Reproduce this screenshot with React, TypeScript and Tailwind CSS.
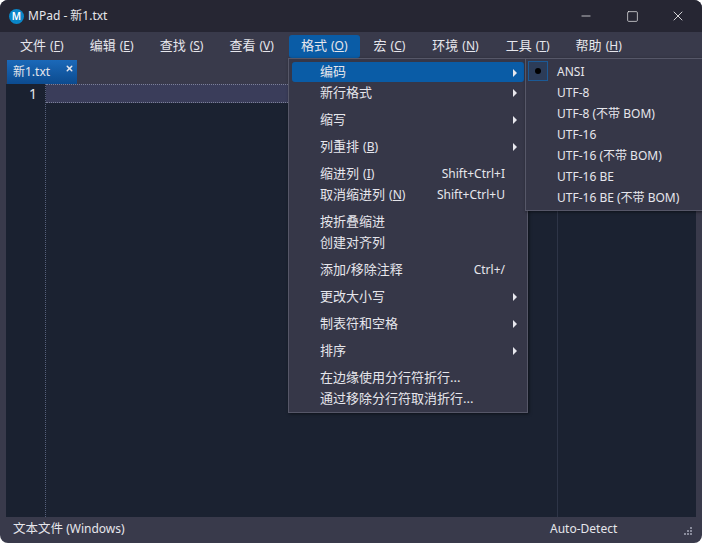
import { X, Minus, Square } from "lucide-react";

const menuBar = [
  { label: "文件", key: "F", extra: "" },
  { label: "编辑", key: "E", extra: "" },
  { label: "查找", key: "S", extra: "" },
  { label: "查看", key: "V", extra: "" },
  { label: "格式", key: "O", active: true, extra: "ml-[1px]" },
  { label: "宏", key: "C", extra: "" },
  { label: "环境", key: "N", extra: "ml-[1px]" },
  { label: "工具", key: "T", extra: "ml-[1px]" },
  { label: "帮助", key: "H", extra: "" },
];

const groups = [
  [
    { label: "编码", arrow: true, active: true },
    { label: "新行格式", arrow: true },
  ],
  [{ label: "缩写", arrow: true }],
  [{ label: "列重排", accel: "B", arrow: true }],
  [
    { label: "缩进列", accel: "I", shortcut: "Shift+Ctrl+I" },
    { label: "取消缩进列", accel: "N", shortcut: "Shift+Ctrl+U" },
  ],
  [{ label: "按折叠缩进" }, { label: "创建对齐列" }],
  [{ label: "添加/移除注释", shortcut: "Ctrl+/" }],
  [{ label: "更改大小写", arrow: true }],
  [{ label: "制表符和空格", arrow: true }],
  [{ label: "排序", arrow: true }],
  [{ label: "在边缘使用分行符折行..." }, { label: "通过移除分行符取消折行..." }],
];

const encodings = ["ANSI", "UTF-8", "UTF-8 (不带 BOM)", "UTF-16", "UTF-16 (不带 BOM)", "UTF-16 BE", "UTF-16 BE (不带 BOM)"];

function Arrow() {
  return <span className="absolute right-[7px] top-[7px] h-0 w-0 border-y-[4px] border-l-[4px] border-y-transparent border-l-[#e8e8ee]" />;
}

function App() {
  return (
    <div
      className="relative flex h-[543px] w-[702px] flex-col overflow-hidden rounded-lg bg-[#393a4b] text-[13px] text-[#e6e6ec]"
      style={{ fontFamily: '"Noto Sans", "Noto Sans CJK SC", sans-serif' }}
    >
      {/* title bar */}
      <div className="flex h-[32px] shrink-0 items-center bg-[#262633]">
        <div className="ml-[9px] flex h-[15px] w-[15px] items-center justify-center rounded-full bg-[#0a86c8] text-[10px] font-semibold leading-none text-white">
          M
        </div>
        <span className="ml-[4px] text-[12px]">MPad - 新1.txt</span>
        <div className="ml-auto flex items-center text-white">
          <Minus size={14} strokeWidth={1.2} className="mr-[33px]" />
          <Square size={13} strokeWidth={1.2} className="mr-[31px]" />
          <X size={16} strokeWidth={1.2} className="mr-[16px]" />
        </div>
      </div>

      {/* menu bar */}
      <div className="flex h-[28px] shrink-0 items-center gap-[2px] pl-[8px]">
        {menuBar.map((item) => (
          <div
            key={item.key + item.label}
            className={
              item.active
                ? "ml-[1px] flex h-[23px] items-center rounded-[3px] bg-[#0a5ca6] px-[12px]"
                : "flex h-[23px] items-center rounded-[3px] px-[12px] " + item.extra
            }
          >
            {item.label}
            <span className="ml-[4px] text-[12px]">
              (<u>{item.key}</u>)
            </span>
          </div>
        ))}
      </div>

      {/* tab strip */}
      <div className="flex h-[24px] shrink-0 pl-[7px]">
        <div className="relative h-[24px] w-[70px] bg-gradient-to-b from-[#1b69b9] to-[#0c4b8f] pl-[6px] text-[12px] leading-[24px]">
          新1.txt
          <X size={9} strokeWidth={4} className="absolute right-[3px] top-[4px]" />
        </div>
      </div>

      {/* editor */}
      <div className="mx-[6px] flex min-h-0 flex-1 bg-[#1b2231]">
        <div className="w-[40px] shrink-0 border-r border-dotted border-[#56607a] bg-[#1a2130] pr-[8px] text-right text-[14px] leading-[20px]">1</div>
        <div className="relative flex-1">
          <div className="h-[19px] border-y border-dotted border-[#7c8098] bg-[#3a3d5a]" />
          <div className="absolute bottom-0 left-[511px] top-0 w-px bg-[#2e3547]" />
        </div>
      </div>

      {/* status bar */}
      <div className="flex h-[26px] shrink-0 items-center pb-[2px] pl-[13px] text-[12px]">
        <span>
          <span className="text-[12.5px]">文本文件</span> (Windows)
        </span>
        <span className="absolute left-[550px]">Auto-Detect</span>
        <svg width="10" height="10" viewBox="0 0 10 10" className="absolute bottom-[6px] right-[9px]" fill="#8a8c9c">
          <rect x="7" y="0" width="2" height="2" />
          <rect x="4" y="3" width="2" height="2" />
          <rect x="7" y="3" width="2" height="2" />
          <rect x="1" y="6" width="2" height="2" />
          <rect x="4" y="6" width="2" height="2" />
          <rect x="7" y="6" width="2" height="2" />
        </svg>
      </div>

      {/* format menu */}
      <div className="absolute left-[288px] top-[58px] flex w-[240px] flex-col gap-[6px] border border-[#565768] bg-[#363748] px-[3px] pb-[3px] pt-[2px] shadow-[1px_1px_3px_rgba(0,0,0,0.5)]">
        {groups.map((group, i) => (
          <div key={i} className="flex flex-col">
            {group.map((row) => (
              <div
                key={row.label}
                className={
                  row.active
                    ? "relative mt-[1px] flex h-[20px] items-center rounded-[3px] bg-[#0a5ca6] pl-[28px]"
                    : "relative flex h-[21px] items-center pl-[28px]"
                }
              >
                {row.label}
                {row.accel && (
                  <span className="ml-[4px] text-[12px]">
                    (<u>{row.accel}</u>)
                  </span>
                )}
                {row.shortcut && <span className="absolute right-[19px] text-[12px]">{row.shortcut}</span>}
                {row.arrow && <Arrow />}
              </div>
            ))}
          </div>
        ))}
      </div>

      {/* encoding submenu */}
      <div className="absolute left-[525px] top-[58px] flex w-[178px] flex-col border border-[#565768] bg-[#363748] py-[2px] pl-[2px] shadow-[1px_1px_3px_rgba(0,0,0,0.5)]">
        {encodings.map((enc, i) => (
          <div key={enc} className="relative flex h-[21px] items-center pl-[29px] text-[12px]">
            {i === 0 && (
              <span className="absolute left-0 top-0 flex h-[20px] w-[20px] items-center justify-center border border-[#1c5a96] bg-[#2c3c58]">
                <span className="h-[6px] w-[6px] rounded-full bg-black" />
              </span>
            )}
            {enc}
          </div>
        ))}
      </div>
    </div>
  );
}

export default App;
